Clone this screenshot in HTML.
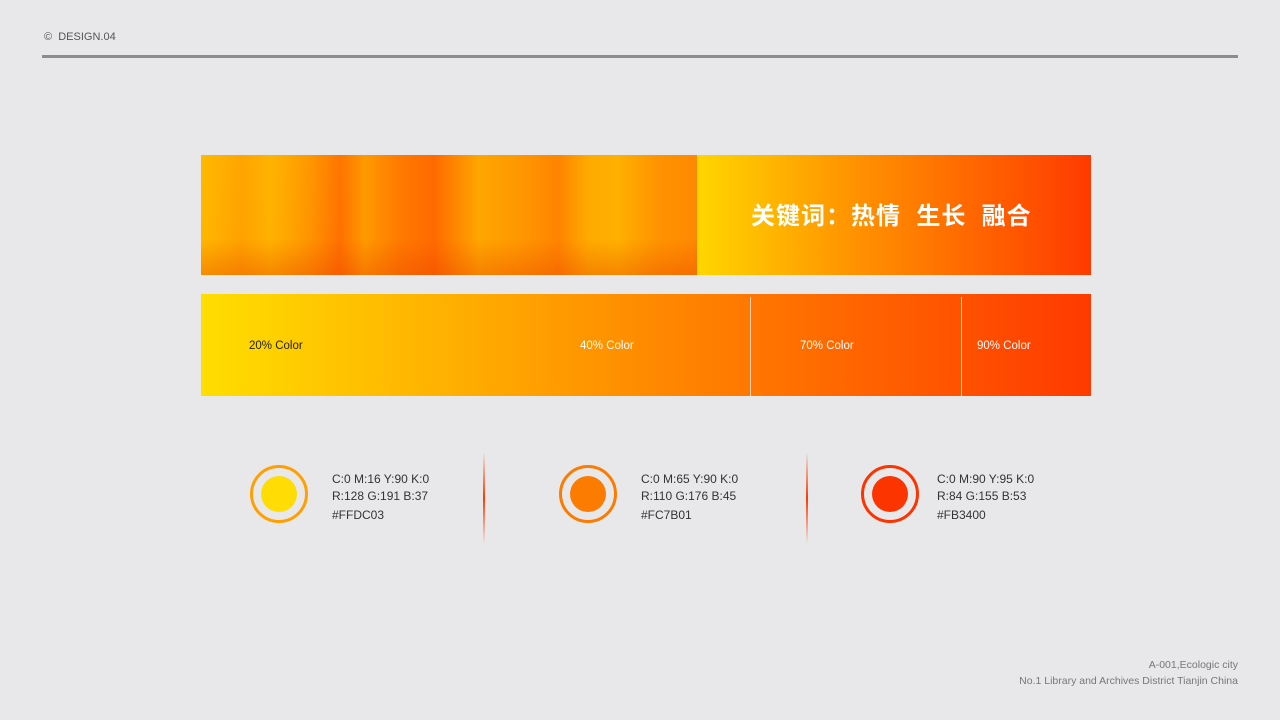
<!DOCTYPE html>
<html><head><meta charset="utf-8"><style>
body{margin:0;width:1280px;height:720px;background:#e8e8ea;position:relative;overflow:hidden;font-family:"Liberation Sans","Noto Sans CJK SC",sans-serif}
.abs{position:absolute}
.t{font-size:12px;color:#333;line-height:17px}
.c{position:absolute;width:52px;height:52px;border-radius:50%;border:3.5px solid;}
.c i{position:absolute;left:8px;top:8px;width:36px;height:36px;border-radius:50%}
.sep{position:absolute;width:2px;height:92px;top:452px;background:linear-gradient(#e8e8ea,#ff3a00 50%,#e8e8ea)}
</style></head><body>
<div class="abs" style="left:44px;top:31px;font-size:11px;color:#555">© &nbsp;DESIGN.04</div>
<div class="abs" style="left:42px;top:55px;width:1196px;height:3px;background:#8c8c8c"></div>

<div class="abs" style="left:201px;top:155px;width:496px;height:120px;background:
linear-gradient(100deg,rgba(255,210,0,.5),rgba(0,0,0,0) 30%),
linear-gradient(90deg,#ffa000 0%,#ff8a00 8%,#ffa800 14%,#ff8c00 22%,#ff7000 28%,#ff9a00 33%,#ff7a00 40%,#ff6a00 47%,#ffa600 56%,#ff9800 64%,#ff8400 72%,#ffaa00 78%,#ffb000 84%,#ff9400 92%,#ff8800 100%);"></div>
<div class="abs" style="left:201px;top:155px;width:496px;height:120px;background:linear-gradient(180deg,rgba(255,255,255,0) 70%,rgba(230,60,0,.35))"></div>
<div class="abs" style="left:697px;top:155px;width:394px;height:120px;background:linear-gradient(90deg,#ffd600,#ff9a00 35%,#ff3a00)"></div>
<div class="abs" style="left:751px;top:196px;font-size:24px;font-weight:bold;color:#fff;letter-spacing:1px">关键词：热情&nbsp; 生长&nbsp; 融合</div>

<div class="abs" style="left:201px;top:294px;width:890px;height:102px;background:linear-gradient(90deg,#ffde00,#ffa400 35%,#ff7a00 60%,#ff5200 85%,#ff3a00)"></div>
<div class="abs" style="left:750px;top:297px;width:1px;height:99px;background:#ffd2b0"></div>
<div class="abs" style="left:961px;top:297px;width:1px;height:99px;background:#ffd2b0"></div>
<div class="abs" style="left:249px;top:340px;font-size:11.5px;color:#222">20% Color</div>
<div class="abs" style="left:580px;top:340px;font-size:11.5px;color:#fff">40% Color</div>
<div class="abs" style="left:800px;top:340px;font-size:11.5px;color:#fff">70% Color</div>
<div class="abs" style="left:977px;top:340px;font-size:11.5px;color:#fff">90% Color</div>

<div class="c" style="left:250px;top:465px;border-color:#ffa000"><i style="background:#ffdc03"></i></div>
<div class="abs t" style="left:332px;top:471px">C:0 M:16 Y:90 K:0<br>R:128 G:191 B:37<br><span style="line-height:20px">#FFDC03</span></div>
<div class="sep" style="left:483px"></div>
<div class="c" style="left:559px;top:465px;border-color:#fc7b01"><i style="background:#fc7b01"></i></div>
<div class="abs t" style="left:641px;top:471px">C:0 M:65 Y:90 K:0<br>R:110 G:176 B:45<br><span style="line-height:20px">#FC7B01</span></div>
<div class="sep" style="left:806px"></div>
<div class="c" style="left:861px;top:465px;border-color:#fb3400"><i style="background:#fb3400"></i></div>
<div class="abs t" style="left:937px;top:471px">C:0 M:90 Y:95 K:0<br>R:84 G:155 B:53<br><span style="line-height:20px">#FB3400</span></div>

<div class="abs" style="right:42px;top:657px;font-size:10.5px;color:#777;text-align:right;line-height:16px">A-001,Ecologic city<br>No.1 Library and Archives District Tianjin China</div>
</body></html>
